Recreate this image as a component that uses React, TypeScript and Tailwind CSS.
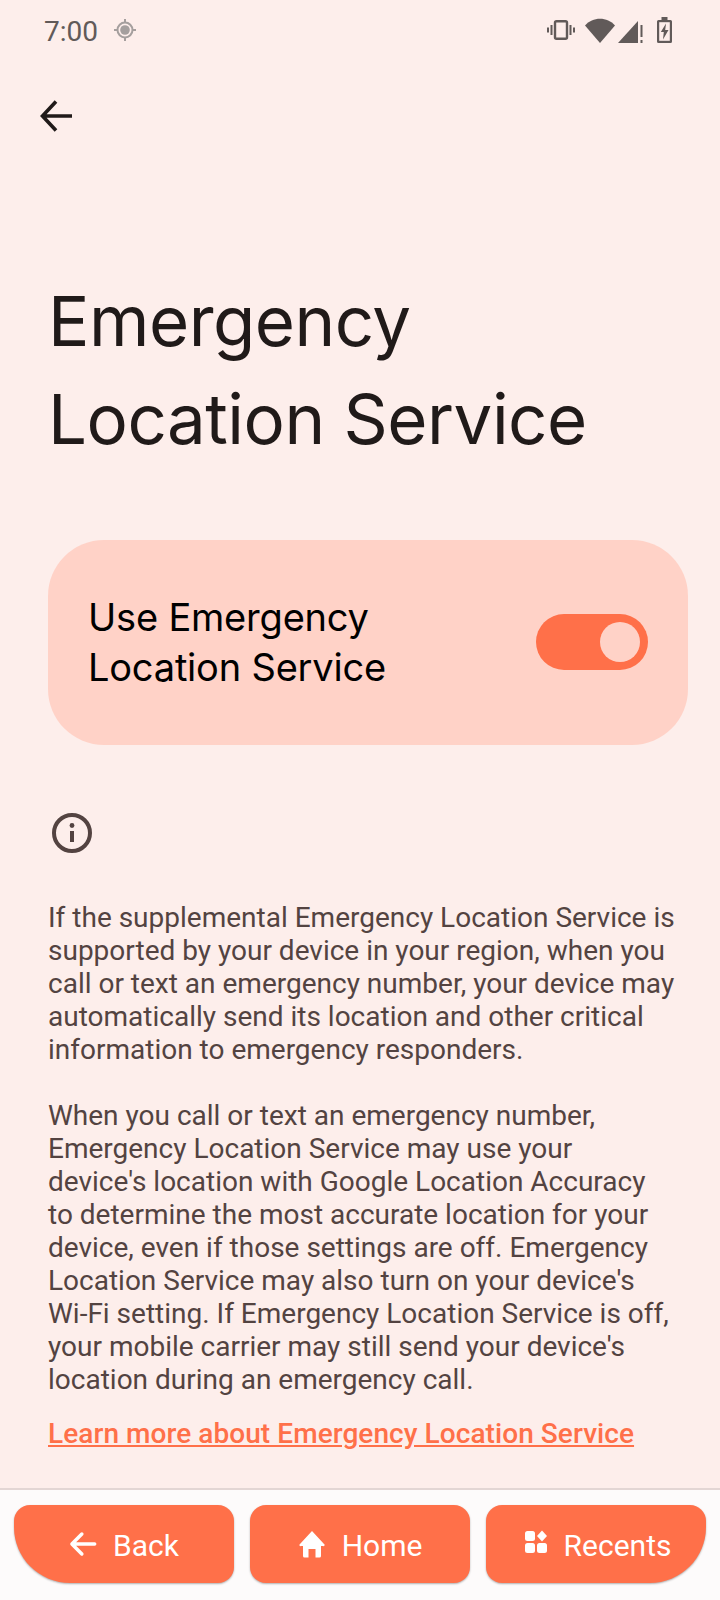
const StatusIcons = () => (
  <div className="flex items-center text-[#615a59]">
    <svg viewBox="0 0 28 20" className="h-[20px] w-[28px]" fill="none" stroke="currentColor">
      <rect x="8" y="1.200" width="12" height="17.600" rx="1.500" strokeWidth="2.400" />
      <path d="M4.500 5v10M1 7.500v5M23.500 5v10M27 7.500v5" strokeWidth="2" />
    </svg>
    <svg viewBox="0 0 30 25" className="ml-[10px] h-[25px] w-[30px]" fill="currentColor">
      <path d="M0 7.500C7.500 -1.500 22.500 -1.500 30 7.500L15 25Z" />
    </svg>
    <svg viewBox="0 0 25 25" className="ml-[3px] h-[25px] w-[25px]" fill="currentColor">
      <path d="M0 25 20 3V25Z" />
      <path d="M22.500 7h2v12h-2zM22.500 22h2v3h-2z" />
    </svg>
    <svg viewBox="0 0 15 26" className="ml-[14px] h-[26px] w-[15px]" fill="none">
      <path d="M4.500 0h6v3h3a1.500 1.500 0 0 1 1.500 1.500v20a1.500 1.500 0 0 1-1.500 1.500h-12A1.500 1.500 0 0 1 0 24.500v-20A1.500 1.500 0 0 1 1.500 3h3Z" fill="currentColor" />
      <rect x="2.200" y="5.200" width="10.600" height="18.600" fill="#fdeeeb" />
      <path d="M9 6.500 3.800 15h3L6 22.500 11.500 13H8.200Z" fill="currentColor" />
    </svg>
  </div>
);

const App = () => {
  return (
    <div className="flex h-[1600px] w-[720px] flex-col overflow-hidden bg-[#fdeeeb] font-['Roboto',sans-serif]">
      <div className="flex h-[60px] shrink-0 items-center justify-between pl-[44px] pr-[48px]">
        <div className="flex items-center gap-[15px] text-[#615a59]">
          <span className="mt-[3px] text-[28px] leading-none">7:00</span>
          <svg viewBox="0 0 24 24" className="h-[24px] w-[24px] text-[#a59f9e]" fill="none" stroke="currentColor">
            <circle cx="12" cy="12" r="7.500" strokeWidth="2" />
            <circle cx="12" cy="12" r="4.800" fill="currentColor" stroke="none" />
            <path d="M12 1v3.500M12 19.500V23M1 12h3.500M19.500 12H23" strokeWidth="2" />
          </svg>
        </div>
        <StatusIcons />
      </div>

      <div className="mt-[24px] flex h-[64px] shrink-0 items-center pl-[40px]">
        <svg viewBox="0 0 32 32" className="h-[32px] w-[32px] text-[#201a19]" fill="none" stroke="currentColor" strokeWidth="3.600">
          <path d="M32 16H3M16 1.500 2.500 16 16 30.500" />
        </svg>
      </div>

      <h1 className="mt-[124px] whitespace-nowrap pl-[48px] text-[69px] font-normal leading-[98px] tracking-[-0.5px] text-[#201a19] font-['Inter',sans-serif]">
        Emergency
        <br />
        Location Service
      </h1>

      <div className="ml-[48px] mr-[32px] mt-[72px] flex h-[205px] shrink-0 items-center justify-between rounded-[56px] bg-[#ffd2c7] pb-[1px] pl-[40px] pr-[40px]">
        <span className="text-[38px] leading-[50px] tracking-[-0.2px] text-[#000000] font-['Inter',sans-serif]">
          Use Emergency
          <br />
          Location Service
        </span>
        <div className="flex h-[56px] w-[112px] items-center justify-end rounded-full bg-[#ff7049] pr-[8px]">
          <div className="h-[40px] w-[40px] rounded-full bg-[#ffd2c7]" />
        </div>
      </div>

      <svg viewBox="0 0 40 40" className="ml-[52px] mt-[68px] h-[40px] w-[40px] shrink-0 text-[#534341]" fill="none" stroke="currentColor">
        <circle cx="20" cy="20" r="18" strokeWidth="4" />
        <path d="M20 18v11" strokeWidth="4" />
        <circle cx="20" cy="12.500" r="2.400" fill="currentColor" stroke="none" />
      </svg>

      <div className="mt-[48px] whitespace-nowrap pl-[48px] text-[28px] leading-[33px] text-[#534341]">
        <p>
          If the supplemental Emergency Location Service is
          <br />
          supported by your device in your region, when you
          <br />
          call or text an emergency number, your device may
          <br />
          automatically send its location and other critical
          <br />
          information to emergency responders.
        </p>
        <p className="mt-[33px]">
          When you call or text an emergency number,
          <br />
          Emergency Location Service may use your
          <br />
          device's location with Google Location Accuracy
          <br />
          to determine the most accurate location for your
          <br />
          device, even if those settings are off. Emergency
          <br />
          Location Service may also turn on your device's
          <br />
          Wi-Fi setting. If Emergency Location Service is off,
          <br />
          your mobile carrier may still send your device's
          <br />
          location during an emergency call.
        </p>
        <a className="mt-[21px] block font-medium tracking-[0.07px] text-[#ff7049] underline">Learn more about Emergency Location Service</a>
      </div>

      <div className="mt-auto flex h-[112px] shrink-0 justify-between border-t-2 border-[#e3d6d4] bg-[#fdfbfb] px-[14px] pt-[15px]">
        <button className="flex h-[78px] w-[220px] items-center justify-center gap-[16px] rounded-[16px] rounded-bl-[56px] bg-[#ff7049] pt-[2px] text-[30px] font-[450] text-white shadow-[0_1px_2px_rgba(0,0,0,0.3)]">
          <svg viewBox="0 0 24 24" className="-mt-[2px] h-[28px] w-[28px]" fill="none" stroke="currentColor" strokeWidth="3" strokeLinecap="round" strokeLinejoin="round">
            <path d="M22 12H3M11 3.500 2.500 12l8.500 8.500" />
          </svg>
          Back
        </button>
        <button className="flex h-[78px] w-[220px] items-center justify-center gap-[16px] rounded-[16px] bg-[#ff7049] pt-[2px] text-[30px] font-[450] text-white shadow-[0_1px_2px_rgba(0,0,0,0.3)]">
          <svg viewBox="0 0 28 28" className="-mt-[2px] h-[28px] w-[28px]" fill="currentColor">
            <path d="M14 1 26 14a1 1 0 0 1-1 2h-2v10a1.500 1.500 0 0 1-1.500 1.500H17.500V19h-7v8.500H6.500A1.500 1.500 0 0 1 5 26V16H3a1 1 0 0 1-1-2Z" />
          </svg>
          Home
        </button>
        <button className="flex h-[78px] w-[220px] items-center justify-center gap-[16px] rounded-[16px] rounded-br-[56px] bg-[#ff7049] pl-[3px] pt-[2px] text-[30px] font-[450] text-white shadow-[0_1px_2px_rgba(0,0,0,0.3)]">
          <svg viewBox="0 0 24 24" className="-mt-[6px] h-[24px] w-[24px]" fill="currentColor">
            <rect x="1" y="1" width="10" height="10" rx="2.500" />
            <rect x="1" y="13" width="10" height="10" rx="2.500" />
            <rect x="13" y="13" width="10" height="10" rx="2.500" />
            <path d="M18 0.500 23 6l-5 5.500L13 6Z" />
          </svg>
          Recents
        </button>
      </div>
    </div>
  );
};

export default App;
